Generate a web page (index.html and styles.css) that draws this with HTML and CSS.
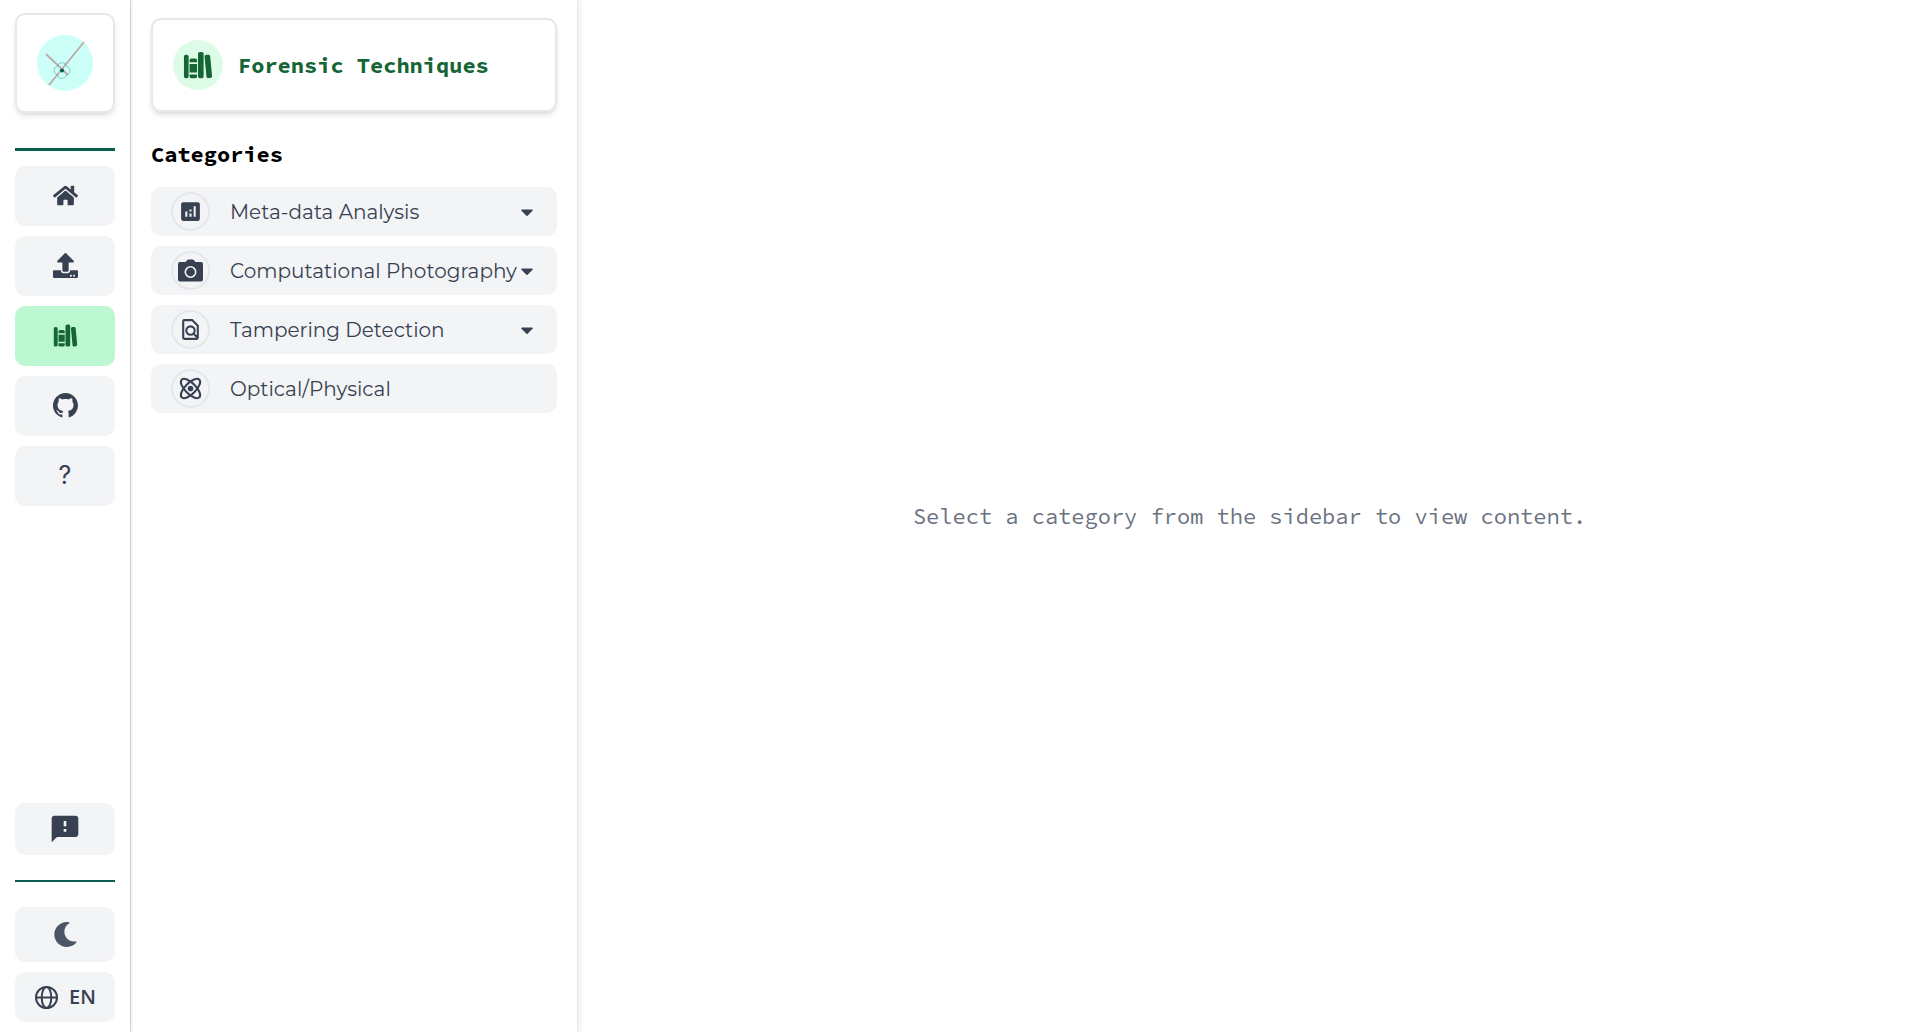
FILE: index.html
```html
<!DOCTYPE html>
<html lang="en">
<head>
<meta charset="utf-8">
<meta name="viewport" content="width=device-width, initial-scale=1">
<title>Forensic Techniques</title>
<link rel="stylesheet" href="styles.css">
</head>
<body>
<svg class="sprite" aria-hidden="true">
  <symbol id="books" viewBox="0 0 512 512">
    <path d="M64 480H48a32 32 0 01-32-32V112a32 32 0 0132-32h16a32 32 0 0132 32v336a32 32 0 01-32 32zM240 176a32 32 0 00-32-32h-64a32 32 0 00-32 32v28a4 4 0 004 4h120a4 4 0 004-4zM112 448a32 32 0 0032 32h64a32 32 0 0032-32v-30a2 2 0 00-2-2H114a2 2 0 00-2 2zM114 240h124a2 2 0 012 2v140a2 2 0 01-2 2H114a2 2 0 01-2-2V242a2 2 0 012-2zM320 480h-32a32 32 0 01-32-32V64a32 32 0 0132-32h32a32 32 0 0132 32v384a32 32 0 01-32 32zM495.89 445.45l-32.23-340c-1.48-15.65-16.94-27-34.53-25.31l-31.85 3c-17.59 1.67-30.65 15.71-29.17 31.36l32.23 340c1.48 15.65 16.94 27 34.53 25.31l31.85-3c17.59-1.67 30.65-15.71 29.17-31.36z"/>
  </symbol>
  <symbol id="caret" viewBox="0 0 320 512">
    <path d="M31.3 192h257.3c17.8 0 26.7 21.5 14.1 34.1L174.1 354.8c-7.8 7.8-20.5 7.8-28.3 0L17.2 226.1C4.6 213.5 13.5 192 31.3 192z"/>
  </symbol>
</svg>

<div class="app">
  <aside class="rail">
    <a class="logo" href="#" aria-label="Start page">
      <svg viewBox="0 0 60 60" width="60" height="60" aria-hidden="true">
        <circle cx="30" cy="30" r="28" fill="#ccfff8"/>
        <g fill="none" stroke="#bfa9a8" stroke-width="1.8"><path d="M49 9 14 52M11 21l22 21"/></g>
        <path d="M22.600 33.200a4.500 4.500 0 0 1 8.800 0a4.500 4.500 0 0 1 0 8.800a4.500 4.500 0 0 1-8.800 0a4.500 4.500 0 0 1 0-8.800z" fill="none" stroke="#0f766e" stroke-opacity=".35"/>
        <circle cx="27" cy="37.500" r="2.100" fill="#065f50"/>
      </svg>
    </a>
    <hr class="rule rule-top">
    <nav class="nav" aria-label="Main">
      <a class="tile" href="#" aria-label="Home"><svg class="icon" viewBox="0 0 576 512"><path d="M280.37 148.26L96 300.11V464a16 16 0 0 0 16 16l112.06-.29a16 16 0 0 0 15.92-16V368a16 16 0 0 1 16-16h64a16 16 0 0 1 16 16v95.64a16 16 0 0 0 16 16.05L464 480a16 16 0 0 0 16-16V300L295.67 148.26a12.19 12.19 0 0 0-15.3 0zM571.6 251.47L488 182.56V44.05a12 12 0 0 0-12-12h-56a12 12 0 0 0-12 12v72.61L318.47 43a48 48 0 0 0-61 0L4.34 251.47a12 12 0 0 0-1.6 16.9l25.5 31A12 12 0 0 0 45.15 301l235.22-193.74a12.19 12.19 0 0 1 15.3 0L530.9 301a12 12 0 0 0 16.9-1.6l25.5-31a12 12 0 0 0-1.7-16.93z"/></svg></a>
      <a class="tile" href="#" aria-label="Upload"><svg class="icon" viewBox="0 0 512 512"><path d="M296 384h-80c-13.3 0-24-10.7-24-24V192h-87.7c-17.8 0-26.7-21.5-14.1-34.1L242.3 5.700c7.500-7.500 19.800-7.500 27.300 0l152.200 152.200c12.600 12.600 3.700 34.100-14.100 34.100H320v168c0 13.300-10.700 24-24 24zm216-8v112c0 13.300-10.700 24-24 24H24c-13.300 0-24-10.700-24-24V376c0-13.300 10.700-24 24-24h136v8c0 30.900 25.100 56 56 56h80c30.900 0 56-25.100 56-56v-8h136c13.300 0 24 10.700 24 24zm-124 88c0-11-9-20-20-20s-20 9-20 20 9 20 20 20 20-9 20-20zm64 0c0-11-9-20-20-20s-20 9-20 20 9 20 20 20 20-9 20-20z"/></svg></a>
      <a class="tile active" href="#" aria-label="Forensic techniques" aria-current="page"><svg class="icon"><use href="#books"/></svg></a>
      <a class="tile" href="#" aria-label="GitHub"><svg class="icon" viewBox="0 0 16 16"><path d="M8 0C3.580 0 0 3.580 0 8c0 3.540 2.290 6.530 5.470 7.590.4.070.55-.17.55-.38 0-.19-.01-.82-.01-1.490-2.010.37-2.530-.49-2.690-.94-.09-.23-.48-.94-.82-1.130-.28-.15-.68-.52-.01-.53.63-.01 1.080.58 1.230.82.72 1.210 1.870.87 2.330.66.07-.52.28-.87.51-1.070-1.780-.2-3.640-.89-3.640-3.950 0-.87.31-1.590.82-2.150-.08-.2-.36-1.020.08-2.120 0 0 .67-.21 2.200.82.64-.18 1.320-.27 2-.27s1.360.09 2 .27c1.530-1.040 2.200-.82 2.200-.82.44 1.100.16 1.920.08 2.120.51.56.82 1.270.82 2.150 0 3.070-1.870 3.750-3.650 3.950.29.25.54.73.54 1.480 0 1.070-.01 1.930-.01 2.200 0 .21.15.46.55.38A8.013 8.013 0 0 0 16 8c0-4.420-3.580-8-8-8z"/></svg></a>
      <a class="tile help" href="#" aria-label="Help">?</a>
    </nav>
    <div class="tools">
      <button class="tile feedback" type="button" aria-label="Send feedback"><svg class="icon-lg" viewBox="0 0 24 24"><path d="M20 2H4c-1.100 0-2 .9-2 2v18l4-4h14c1.100 0 2-.9 2-2V4c0-1.100-.9-2-2-2zm-7 12h-2v-2h2v2zm0-4h-2V6h2v4z"/></svg></button>
      <hr class="rule rule-bottom">
      <button class="tile theme" type="button" aria-label="Dark mode"><svg class="icon" viewBox="0 0 512 512"><path d="M283.211 512c78.962 0 151.079-35.925 198.857-94.792 7.068-8.708-.639-21.430-11.562-19.350-124.203 23.654-238.262-71.576-238.262-196.954 0-72.222 38.662-138.635 101.498-174.394 9.686-5.512 7.250-20.197-3.756-22.230A258.156 258.156 0 0 0 283.211 0c-141.309 0-256 114.511-256 256 0 141.309 114.511 256 256 256z"/></svg></button>
      <button class="tile language" type="button"><svg class="icon line" viewBox="0 0 25 25" stroke-width="2"><circle cx="12.500" cy="12.500" r="10.500"/><ellipse cx="12.500" cy="12.500" rx="4.800" ry="10.500"/><path d="M2 12.500h21"/></svg><span>EN</span></button>
    </div>
  </aside>

  <section class="panel">
    <header class="card">
      <span class="badge"><svg class="icon-title"><use href="#books"/></svg></span>
      <h1 class="heading">Forensic Techniques</h1>
    </header>
    <h2 class="heading categories-title">Categories</h2>
    <div class="categories">
      <button class="category" type="button">
        <span class="ring"><svg class="icon" viewBox="0 0 24 24"><path d="M19 3H5c-1.100 0-2 .9-2 2v14c0 1.100.9 2 2 2h14c1.100 0 2-.9 2-2V5c0-1.100-.9-2-2-2zM9 17H7v-5h2v5zm4 0h-2v-3h2v3zm0-5h-2v-2h2v2zm4 5h-2V7h2v10z"/></svg></span>
        <span class="label">Meta-data Analysis</span>
        <svg class="caret"><use href="#caret"/></svg>
      </button>
      <button class="category" type="button">
        <span class="ring"><svg class="icon" viewBox="0 0 25 25"><path d="M7.500 4 9 2.200Q9.600 1.500 10.500 1.500h4Q15.400 1.500 16 2.200L17.500 4H23a2 2 0 0 1 2 2v15.500a2 2 0 0 1-2 2H2a2 2 0 0 1-2-2V6a2 2 0 0 1 2-2z"/><circle cx="12.500" cy="14" r="5.200" fill="none" stroke="#f3f4f6" stroke-width="1.600"/></svg></span>
        <span class="label">Computational Photography</span>
        <svg class="caret"><use href="#caret"/></svg>
      </button>
      <button class="category" type="button">
        <span class="ring"><svg class="icon line" viewBox="0 0 24 24" stroke-width="2"><path d="M18 21H6a1 1 0 0 1-1-1V4a1 1 0 0 1 1-1h7.600L19 8.400V20zM14.800 15.800 19.300 20.300"/><circle cx="12" cy="13" r="4"/></svg></span>
        <span class="label">Tampering Detection</span>
        <svg class="caret"><use href="#caret"/></svg>
      </button>
      <button class="category" type="button">
        <span class="ring"><svg class="icon line" viewBox="0 0 24 24" stroke-width="2"><ellipse cx="12" cy="12" rx="12" ry="5.200" transform="rotate(45 12 12)"/><ellipse cx="12" cy="12" rx="12" ry="5.200" transform="rotate(-45 12 12)"/><circle cx="12" cy="12" r="1.700" fill="currentColor"/></svg></span>
        <span class="label">Optical/Physical</span>
      </button>
    </div>
  </section>

  <main class="content">
    <p>Select a category from the sidebar to view content.</p>
  </main>
</div>
</body>
</html>
```
FILE: styles.css
```css
* { box-sizing: border-box; }

body {
  margin: 0;
  background: #fff;
  color: #374151;
  font-family: "Noto Sans", "Open Sans", sans-serif;
  font-size: 20px;
  line-height: 30px;
}

.sprite { display: none; }

svg { display: block; fill: currentColor; }

.line { fill: none; stroke: currentColor; }

.icon { width: 25px; height: 25px; }
.icon-lg { width: 32px; height: 32px; }
.icon-title { width: 30px; height: 30px; }

.app { display: flex; min-height: 100vh; }

/* Icon rail */
.rail {
  flex: 0 0 131px;
  display: flex;
  flex-direction: column;
  padding: 13px 15px 10px;
  border-right: 1px solid #d1d5db;
  box-shadow: 0 1px 3px rgba(0, 0, 0, .12);
}

.logo {
  display: flex;
  align-items: center;
  justify-content: center;
  height: 100px;
  border: 2px solid #e5e7eb;
  border-radius: 10px;
  box-shadow: 0 4px 6px -1px rgba(0, 0, 0, .1), 0 2px 4px -2px rgba(0, 0, 0, .1);
}

.rule { width: 100%; border: 0; background: #065f4f; }
.rule-top { height: 3px; margin: 35px 0 15px; }
.rule-bottom { height: 2px; margin: 25px 0; }

.nav { display: flex; flex-direction: column; gap: 10px; }

.tile {
  display: flex;
  align-items: center;
  justify-content: center;
  gap: 10px;
  width: 100%;
  height: 60px;
  padding: 0;
  border: 0;
  border-radius: 10px;
  background: #f3f4f6;
  color: #374151;
  font: inherit;
  text-decoration: none;
}

.nav .tile { padding-bottom: 2px; }
.tile.active { background: #bbf7d0; color: #166534; }
.tile.help { font-family: Inter, sans-serif; font-size: 25px; }

.tools { margin-top: auto; }
.feedback { height: 52px; }
.theme { height: 55px; margin-bottom: 10px; color: #4b5563; }
.language { height: 50px; font-family: "Open Sans", sans-serif; font-weight: 600; }

/* Category panel */
.panel {
  flex: 0 0 447px;
  padding: 18px 20px;
  border-right: 1px solid #e5e7eb;
  box-shadow: 2px 0 5px rgba(0, 0, 0, .08);
}

.card {
  display: flex;
  align-items: center;
  gap: 15px;
  height: 94px;
  padding: 20px;
  border: 2px solid #e5e7eb;
  border-radius: 10px;
  box-shadow: 0 4px 6px -1px rgba(0, 0, 0, .1), 0 2px 4px -2px rgba(0, 0, 0, .1);
  color: #166534;
}

.badge {
  display: flex;
  align-items: center;
  justify-content: center;
  width: 50px;
  height: 50px;
  border-radius: 50%;
  background: #dcfce7;
}

.heading {
  margin: 0;
  font: 700 22px/35px "Source Code Pro", "Liberation Mono", monospace;
}

.categories-title { margin: 25px 0 15px; color: #000; }

.categories { display: flex; flex-direction: column; gap: 10px; }

.category {
  display: flex;
  align-items: center;
  width: 100%;
  height: 49px;
  padding: 0 20px;
  border: 0;
  border-radius: 10px;
  background: #f3f4f6;
  color: #374151;
  font: 400 20px/30px Montserrat, "Open Sans", sans-serif;
  text-align: left;
}

.ring {
  flex: none;
  padding: 5px;
  border: 2px solid #e5e7eb;
  border-radius: 50%;
}

.label { flex: 1; margin-left: 20px; white-space: nowrap; }

.caret { flex: none; width: 20px; height: 20px; }

/* Content area */
.content {
  flex: 1;
  display: flex;
  align-items: center;
  justify-content: center;
  padding-left: 10px;
}

.content p {
  margin: 0;
  color: #6b7280;
  font: 400 22px/35px "Source Code Pro", "Liberation Mono", monospace;
}
```
